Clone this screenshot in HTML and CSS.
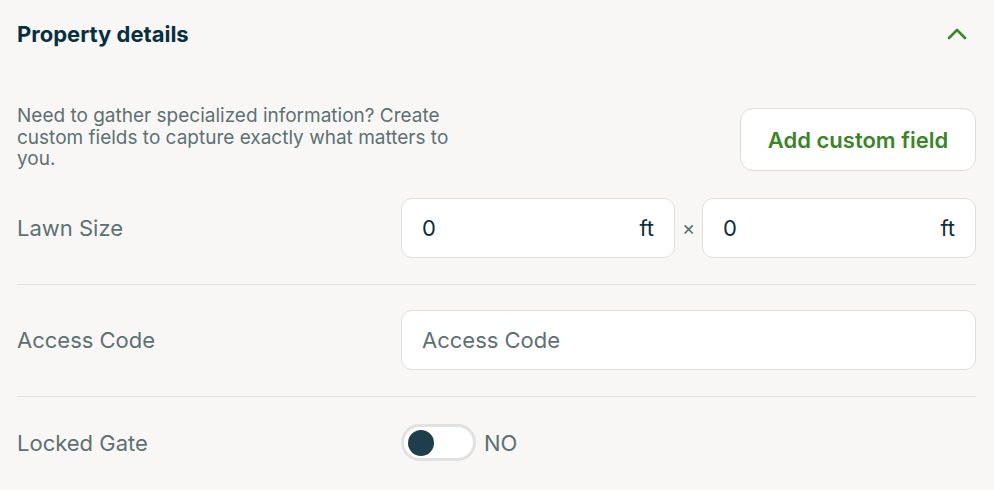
FILE: index.html
```html
<!DOCTYPE html>
<html lang="en">
<head>
  <meta charset="UTF-8" />
  <meta name="viewport" content="width=device-width, initial-scale=1.0" />
  <title>Property details</title>
  <link rel="stylesheet" href="styles.css">
</head>
<body>
  <section class="panel">
    <!-- Collapsible header -->
    <div class="panel-header">
      <h2 class="panel-title">Property details</h2>
      <svg class="chevron" width="22" height="14" viewBox="0 0 22 14" aria-hidden="true">
        <path d="M3 11 L11 3 L19 11" fill="none" stroke="#3b8a2a" stroke-width="2.6" stroke-linecap="round" stroke-linejoin="round"/>
      </svg>
    </div>

    <div class="intro">
      <p class="intro-text">Need to gather specialized information? Create custom fields to capture exactly what matters to you.</p>
      <button class="add-btn">Add custom field</button>
    </div>

    <!-- Fields -->
    <div class="field-row first">
      <label class="field-label">Lawn Size</label>
      <div class="size-inputs">
        <div class="input-box"><span class="value">0</span><span class="unit">ft</span></div>
        <span class="times">×</span>
        <div class="input-box"><span class="value">0</span><span class="unit">ft</span></div>
      </div>
    </div>

    <div class="field-row">
      <label class="field-label">Access Code</label>
      <div class="input-box"><span class="placeholder">Access Code</span></div>
    </div>

    <div class="field-row last">
      <label class="field-label">Locked Gate</label>
      <div class="toggle-wrap">
        <span class="toggle"><span class="knob"></span></span>
        <span class="toggle-text">NO</span>
      </div>
    </div>
  </section>
</body>
</html>
```

FILE: styles.css
```css
body {
  margin: 0;
  background-color: #f8f7f5;
  font-family: 'Inter', 'Noto Sans', sans-serif;
  color: #5d7173;
}
.panel {
  padding: 0 18px 0 17px;
}
.panel-header {
  display: flex;
  align-items: center;
  justify-content: space-between;
  height: 68px;
}
.panel-title {
  margin: 0;
  font-size: 22px;
  font-weight: 700;
  color: #06303f;
}
.chevron {
  margin-right: 8px;
}
.intro {
  display: flex;
  justify-content: space-between;
  align-items: flex-start;
  margin-top: 37px;
}
.intro-text {
  margin: 0;
  max-width: 460px;
  font-size: 19px;
  line-height: 21.5px;
  color: #5d7173;
}
.add-btn {
  margin-top: 3px;
  width: 236px;
  height: 63px;
  background: #fff;
  border: 1px solid #dedddb;
  border-radius: 13px;
  font-family: inherit;
  font-size: 22px;
  font-weight: 600;
  color: #3b8526;
}
.field-row {
  display: grid;
  grid-template-columns: 384px 1fr;
  align-items: center;
  padding: 25px 0 26px;
  border-bottom: 1px solid #e1e0de;
}
.field-row.first {
  padding-top: 27px;
}
.field-row.last {
  border-bottom: none;
  padding-top: 27px;
}
.field-label {
  font-size: 22px;
  color: #5d7173;
}
.size-inputs {
  display: flex;
  align-items: center;
}
.size-inputs .input-box {
  flex: 1;
}
.times {
  width: 27px;
  text-align: center;
  font-size: 20px;
  color: #5d7173;
}
.input-box {
  display: flex;
  align-items: center;
  justify-content: space-between;
  height: 58px;
  padding: 0 20px;
  background: #fff;
  border: 1px solid #e0dfdd;
  border-radius: 11px;
  font-size: 22px;
}
.value,
.unit {
  color: #0b2f3c;
}
.placeholder {
  color: #5d7173;
}
.toggle-wrap {
  display: flex;
  align-items: center;
  gap: 8px;
}
.toggle {
  display: flex;
  align-items: center;
  box-sizing: border-box;
  width: 75px;
  height: 37px;
  padding: 0 4px;
  background: #fff;
  border: 3px solid #dfe2e1;
  border-radius: 19px;
}
.knob {
  width: 26px;
  height: 26px;
  border-radius: 50%;
  background: #1f3e4b;
}
.toggle-text {
  font-size: 22px;
  color: #5d7173;
}
```
